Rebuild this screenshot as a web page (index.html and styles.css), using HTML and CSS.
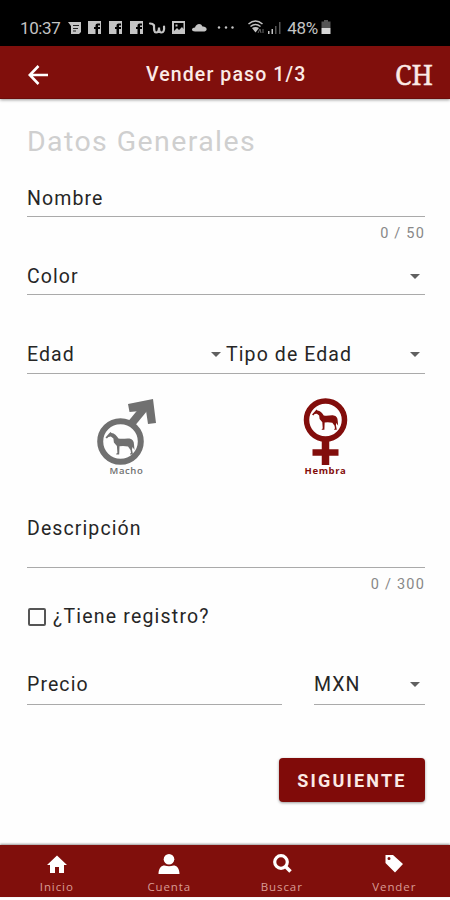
FILE: index.html
```
<!DOCTYPE html>

<html lang="es">
<head>
    <meta charset="utf-8">
    <meta name="viewport" content="width=device-width, initial-scale=1">
    <title>Vender paso 1/3</title>
    <link rel="stylesheet" href="styles.css">
</head>

<body>

    <!-- status bar -->
    <div class="status">
        <span class="status_time">10:37</span>
        <svg class="status_icons" width="218" height="20" viewBox="67 18 218 20" fill="#c4c4c4">
            <path d="M69 22h13v10l-2 2h-8V26z"/>
            <path d="M74 25.500h6M74 28.500h5M74 31h3" stroke="#222" fill="none"/>
            <path id="fb" fill-rule="evenodd" d="M89 21h13v13h-3v-5h2v-2h-2v-1.500h2v-2h-2.500q-2 0-2 2V27h-1.500v2h1.500v5H89z"/>
            <use href="#fb" x="21"/>
            <use href="#fb" x="42"/>
            <path d="M151 23.500l2.500.5 1.500 1.500M155 25c0 5 0 7.500 2 7.500s3-2 3-5c0 3 .5 5 2.500 5s3-2.500 2.500-6" fill="none" stroke="#c4c4c4" stroke-width="2.200" stroke-linecap="round"/>
            <path fill-rule="evenodd" d="M173 21h13v13h-13zM175 23v8l3-3 2 2 3-3 1.500 2v-6zM176.500 24.500h2v2h-2z"/>
            <path d="M196 31.500c-4 0-4-4 0-4 1-4 6-5 7.500-1 4-.5 6 4 2 5z"/>
            <circle cx="220" cy="27.500" r="1.200"/>
            <circle cx="227" cy="27.500" r="1.200"/>
            <circle cx="233.500" cy="27.500" r="1.200"/>
            <path d="M249.500 24q7-6 14 0M251.500 26.500q5-4 10 0" fill="none" stroke="#c4c4c4" stroke-width="1.500"/>
            <path d="M253 28q3.500-2 7 0l-3.500 4.500z"/>
            <path d="M259 33l2-4 1 4M264 29v4" fill="none" stroke="#666"/>
            <path d="M269 31h1.500v3H269zM272.500 29h1.500v5h-1.500z"/>
            <path d="M276 26h1.500v8H276zM280 22h1.500v12H280z" fill="#555"/>
        </svg>
        <span class="status_time">48%</span>
        <svg class="battery" width="10" height="15" viewBox="0 0 10 15">
            <path d="M3 0h4v1.500h2.500V8H.5V1.500H3z" fill="#555"/>
            <path d="M.5 8h9v6h-9z" fill="#d8d8d8"/>
        </svg>
    </div>

    <!-- top bar -->
    <header class="topbar">
        <svg class="back" width="20" height="20" viewBox="0 0 20 20" fill="none" stroke="#fff" stroke-width="2.600">
            <path d="M10.500 1L1.800 10l8.700 9M2 10h18"/>
        </svg>
        <h1 class="topbar_title">Vender paso 1/3</h1>
        <span class="topbar_logo">CH</span>
    </header>

    <main class="form">
        <h2 class="form_title">Datos Generales</h2>

        <div class="field field--name"><span>Nombre</span></div>
        <div class="counter">0 / 50</div>

        <div class="field field--color"><span>Color</span><i class="caret"></i></div>

        <div class="field field--age">
            <span class="age">Edad<i class="caret"></i></span>
            <span>Tipo de Edad</span><i class="caret"></i>
        </div>

        <div class="sexes">
            <div class="sex sex--male">
                <svg width="62" height="68" viewBox="0 0 62 68">
                    <circle cx="24.500" cy="43.500" r="20.300" fill="none" stroke="currentColor" stroke-width="6"/>
                    <path d="M36 25L50 8" stroke="currentColor" stroke-width="8"/>
                    <path d="M32 6L57 1 60 25 52 26 50 12.500 33.500 14z" fill="currentColor"/>
                    <path id="horse" d="M9.500 39.500l3.500-4 1.500-1.500 1 1c3 0 5 2.500 7 5.500 4 1 7-.5 11 0 3 .5 4.500 2.500 4.500 6l.5 5.500-2-3-.5 2.500 1 5h-3l.2-1 .8-.5-.5-3-2.500-3.500-5-.5-3.500.2-.3 8.300h-3l.2-1 1-.5-.5-7-3-3.500-.5-4-2.500-2-2.500.5-1.500 1.500z" fill="currentColor"/>
                </svg>
                <span class="sex_label">Macho</span>
            </div>
            <div class="sex sex--female">
                <svg width="46" height="68" viewBox="0 0 46 68">
                    <circle cx="22.500" cy="22" r="19" fill="none" stroke="currentColor" stroke-width="5.500"/>
                    <path d="M22.500 41v26" stroke="currentColor" stroke-width="7.500"/>
                    <path d="M9.500 54.500h26" stroke="currentColor" stroke-width="6.500"/>
                    <use href="#horse" transform="translate(.5 -19) scale(.9)"/>
                </svg>
                <span class="sex_label">Hembra</span>
            </div>
        </div>

        <div class="field field--description"><span>Descripción</span></div>
        <div class="counter">0 / 300</div>

        <label class="check"><span class="check_box"></span>¿Tiene registro?</label>

        <div class="price">
            <div class="field"><span>Precio</span></div>
            <div class="field"><span class="currency">MXN</span><i class="caret"></i></div>
        </div>

        <button class="next">SIGUIENTE</button>
    </main>

    <nav class="tabs">
        <div class="tab">
            <svg width="22" height="20" viewBox="0 0 22 20"><path d="M11 1.500l10 9.500h-3v8h-5v-6H9v6H4v-8H1z"/></svg>
            Inicio
        </div>
        <div class="tab">
            <svg width="22" height="20" viewBox="0 0 22 20"><ellipse cx="11" cy="5.200" rx="5.300" ry="5.200"/><path d="M.5 20c0-6 3-8.500 6-8.500q4.500 1.500 9 0c3 0 6 2.500 6 8.500z"/></svg>
            Cuenta
        </div>
        <div class="tab">
            <svg width="22" height="20" viewBox="0 0 22 20"><circle cx="10" cy="8" r="6.300" fill="none" stroke="#fff" stroke-width="3.200"/><path d="M14 12l5.500 5.500" stroke="#fff" stroke-width="3.500"/></svg>
            Buscar
        </div>
        <div class="tab">
            <svg width="22" height="20" viewBox="0 0 22 20"><path fill-rule="evenodd" d="M2.500 1H10l10 9-8 8.500L2.500 9zM4.500 4.500a1.500 1.500 0 1 0 3 0 1.500 1.500 0 1 0-3 0z"/></svg>
            Vender
        </div>
    </nav>

</body>

</html>
```
FILE: styles.css
```
* {
    box-sizing: border-box;
}

body {
    margin: 0;
    height: 900px;
    font-family: Roboto, sans-serif;
    color: #262626;
    background-color: #fefefe;
    overflow: hidden;
}

.status {
    height: 46px;
    padding: 10px 0 0 20px;
    display: flex;
    align-items: center;
    background-color: black;
}

.status_time {
    color: #c4c4c4;
    font-size: 17px;
    letter-spacing: -0.4px;
}

.status_icons {
    width: 218px;
    margin: 0 3px 0 6px;
    flex: none;
}

.battery {
    margin: -1px 0 0 3px;
}

.topbar {
    height: 53px;
    padding: 5px 17px 0 28px;
    display: flex;
    align-items: center;
    color: white;
    background-color: #800f0c;
    border-bottom: 1px solid #6b0d0b;
    box-shadow: 0 1px 3px rgba(0, 0, 0, 0.4);
}

.topbar_title {
    margin: 0 auto 0 98px;
    font-size: 19.5px;
    font-weight: 500;
    letter-spacing: 1.1px;
    color: #fbeae6;
}

.topbar_logo {
    font-family: "Noto Serif", "Liberation Serif", serif;
    font-size: 27px;
    -webkit-text-stroke: 0.4px #fbeae6;
    color: #fbeae6;
}

.form {
    height: 746px;
    padding: 24px 25px 0 27px;
}

.form_title {
    height: 37px;
    margin: 0;
    line-height: 37px;
    font-size: 28.5px;
    font-weight: 400;
    letter-spacing: 1.4px;
    color: #cfcfcf;
}

.field {
    display: flex;
    align-items: center;
    font-size: 19.5px;
    letter-spacing: 1.1px;
    border-bottom: 1px solid #aaa;
}

.field--name {
    height: 57px;
    padding-top: 20px;
}

.field--color {
    height: 46px;
    padding-top: 10px;
}

.field--age {
    height: 79px;
    padding-top: 41px;
}

.age {
    width: 199px;
    padding-right: 5px;
    display: flex;
    align-items: center;
}

.age .caret {
    margin-right: 0;
}

.caret {
    width: 0;
    height: 0;
    margin: 0 5px 0 auto;
    border-left: 5px solid transparent;
    border-right: 5px solid transparent;
    border-top: 5px solid #606060;
}

.counter {
    height: 32px;
    line-height: 33px;
    text-align: right;
    font-size: 14.5px;
    letter-spacing: 1.2px;
    color: #888;
}

.sexes {
    height: 127px;
    padding-top: 24px;
    display: grid;
    grid-template-columns: 1fr 1fr;
}

.sex {
    display: flex;
    flex-direction: column;
    align-items: center;
    line-height: 10px;
}

.sex--male {
    color: #707070;
}

.sex--female {
    color: #820d0b;
}

.sex_label {
    font-family: "Open Sans", sans-serif;
    font-size: 9.5px;
    font-weight: 700;
    letter-spacing: 0.6px;
}

.sex--male .sex_label {
    font-weight: 600;
}

.field--description {
    height: 67px;
    padding-bottom: 11px;
}

.check {
    height: 33px;
    display: flex;
    align-items: center;
    font-size: 19.5px;
    letter-spacing: 1.2px;
}

.check_box {
    width: 18px;
    height: 18px;
    margin: 0 7px 0 1px;
    border: 2px solid #555;
    border-radius: 2px;
}

.price {
    height: 72px;
    display: grid;
    grid-template-columns: 255px 111px;
    justify-content: space-between;
}

.price .field {
    padding-top: 32px;
}

.next {
    width: 146px;
    height: 44px;
    margin: 53px 0 0 auto;
    padding: 0;
    display: block;
    font-family: Roboto, sans-serif;
    font-size: 18px;
    font-weight: 700;
    letter-spacing: 2.2px;
    color: #fbe9e4;
    background-color: #800b09;
    border: 0;
    border-radius: 4px;
    box-shadow: 0 1px 3px rgba(0, 0, 0, 0.4);
}

.tabs {
    height: 52px;
    display: grid;
    grid-template-columns: repeat(4, 1fr);
    background-color: #800f0c;
    box-shadow: 0 -1px 2px rgba(0, 0, 0, 0.4);
}

.tab {
    padding: 9px 0 0 1px;
    display: flex;
    flex-direction: column;
    align-items: center;
    font-family: "Open Sans", sans-serif;
    font-size: 11.5px;
    line-height: 25px;
    letter-spacing: 0.9px;
    color: #d99c95;
}

.tab svg {
    fill: white;
}
```
